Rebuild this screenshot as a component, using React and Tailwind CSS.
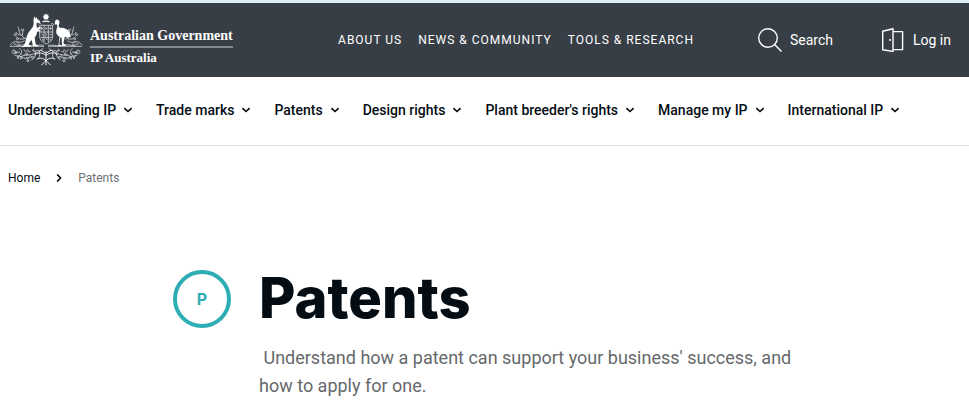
import React from 'react';

const topLinks = ['About us', 'News & Community', 'Tools & Research'];

const menuItems = [
  'Understanding IP',
  'Trade marks',
  'Patents',
  'Design rights',
  "Plant breeder's rights",
  'Manage my IP',
  'International IP',
];

// One side of the wattle, mirrored for the other
const WattleBranch = () => (
  <g fill="none" stroke="currentColor" strokeWidth="2.6" opacity="0.75">
    <path d="M80 118c-12-4-20-14-24-28M62 104c-8 2-12-2-14-8M66 108c4-8 2-16-2-22M76 114c-10 6-20 4-26-4M60 92c-4-4-6-8-5-12M74 122c-8 6-18 6-24 2" />
    <path d="M30 136c6-10 16-14 24-8s2 14-4 10M30 139h102M40 132c8-2 10 6 20 4s18-2 26 0 20 2 28 0 12 0 18 0" />
    <path d="M130 144c-14 14-34 22-58 22M46 150c-8 0-12 6-8 10s10 0 8-4M58 146c8 2 10 12 2 16M66 160c-6 8-14 10-22 6M84 148c-2 8 4 10 8 6M92 164c-4 8-10 14-18 12M106 158c2 10-4 18-12 22M118 150c0 10 2 18-2 24M72 148c0 6 6 8 10 4M102 146c-4 6 0 12 6 8" />
    <path d="M38 150c6 6 14 8 22 6M50 168c8 4 18 2 24-4M78 172c6 4 14 2 18-4M96 150c6 4 14 4 20 0M60 178c4-4 10-6 16-4" />
    <circle cx="46" cy="104" r="3" />
    <circle cx="52" cy="116" r="3" />
    <circle cx="70" cy="90" r="2" />
    <circle cx="48" cy="158" r="3" />
    <circle cx="64" cy="172" r="3" />
    <circle cx="80" cy="162" r="3" />
    <circle cx="98" cy="172" r="3" />
    <circle cx="54" cy="174" r="2" />
    <circle cx="84" cy="182" r="3" />
  </g>
);

const CoatOfArms = () => (
  <svg className="w-[76px] h-14 shrink-0" viewBox="24 36 228 168" fill="currentColor" aria-hidden="true">
    <WattleBranch />
    <g transform="translate(276 0) scale(-1 1)">
      <WattleBranch />
    </g>
    {/* star and wreath */}
    <path d="M138 40l3 5 5-2-2 5 4 3-4 3 1 5-5-2-2 3-2-3-5 2 1-5-4-3 4-3-2-5 5 2z" />
    <path d="M127 64c7-3 15-3 22 0l-1 3c-7-2-13-2-20 0z" />
    {/* shield */}
    <g fill="none" stroke="currentColor" strokeWidth="2.4" opacity="0.85">
      <path d="M119 76h39v32c0 12-8 19-19 24-12-5-20-12-20-24zM119 96h39M132 76v50M145 76v50M122 112h34" />
      <path d="M125 80v11M121 86h8M136 82l6 7M142 82l-6 7M152 80v10M148 85h7M124 101l6 6M138 99v10M148 104h8M137 114l5 6M127 117l3 5M149 116l3 5" />
      <path d="M116 73c2-4 6-4 8-1M153 72c4-3 7-1 8 3" />
    </g>
    {/* kangaroo */}
    <path d="M103 49l4 7 3-6 2 8c4 1 7 4 9 8l-3 3-8-1c-1 6 0 10 1 15l10-3 2 3-9 7 7 1 1 3-11 1c0 8-3 13-7 17l3 21 7 3v3h-15l-4-19-6 7-3 8 8 2v3H76c-5 1-9 2-12 1 8-3 11-10 13-19 3-15 8-26 16-34 6-7 8-12 8-20-1-6 0-14 2-19z" />
    {/* emu */}
    <path d="M165 66c0-5 4-8 8-7 5 1 6 6 5 11-1 5-3 8-1 11 3 4 12 1 20 5 10 5 15 14 15 27l-5-3-4 4-5-4-4 2c-1 8-4 11-3 19l7 3v3h-12l-1-24-3-1-3 8-1 14 6 2v2h-11l3-4 1-15 2-8c-8-5-12-11-10-20 1-6 3-9 3-14 0-3-2-4-6-3l-2-3z" />
    {/* scroll below the shield */}
    <g fill="none" stroke="currentColor" strokeWidth="3" opacity="0.9">
      <path d="M104 164c12-8 22-6 34 2 12-8 22-10 34-2M110 178c10-6 20-4 28 4 8-8 18-10 28-4M138 154v42M124 194c6-2 10-8 14-14 4 6 8 12 14 14M122 150l16 10 16-10" />
    </g>
  </svg>
);

const Chevron = ({ className }) => (
  <svg
    className={className}
    viewBox="0 0 8 8"
    fill="none"
    stroke="currentColor"
    strokeWidth="1.6"
    aria-hidden="true"
  >
    <path d="M0.4 2.2L4 5.5l3.6-3.3" />
  </svg>
);

const SearchIcon = () => (
  <svg className="w-6 h-6" viewBox="0 0 24 24" fill="none" stroke="currentColor" strokeWidth="1.4" aria-hidden="true">
    <circle cx="10" cy="10" r="9.3" />
    <path d="M16.6 16.6l7 7" />
  </svg>
);

const DoorIcon = () => (
  <svg className="w-6 h-6" viewBox="0 0 24 24" fill="none" stroke="currentColor" strokeWidth="1.4" strokeLinejoin="round" aria-hidden="true">
    <path d="M1.7 3.2L12 0.8v22.6L1.7 21.8z" />
    <path d="M12 3.6h9.6v18H12" />
    <circle cx="9" cy="12" r="1" fill="currentColor" stroke="none" />
  </svg>
);

const Header = () => (
  <header className="border-t-3 border-[#d9eff6] bg-[#373e46] text-white">
    <div className="flex items-center pl-2 pr-[18px] h-[74px]">
      <a href="#" className="flex items-center gap-1.5">
        <CoatOfArms />
        <span className="flex flex-col font-['Liberation_Serif',serif] font-bold pt-3.5">
          <span className="text-sm leading-5 border-b-2 border-[#858a8e]">Australian Government</span>
          <span className="text-[13px] leading-5">IP Australia</span>
        </span>
      </a>
      <nav className="ml-auto flex gap-4 text-xs tracking-[1px] uppercase">
        {topLinks.map((link) => (
          <a key={link} href="#">{link}</a>
        ))}
      </nav>
      <div className="flex items-center gap-12 ml-16 text-sm">
        <button className="flex items-center gap-2">
          <SearchIcon />
          Search
        </button>
        <a href="#" className="flex items-center gap-2">
          <DoorIcon />
          Log in
        </a>
      </div>
    </div>
  </header>
);

const MainMenu = () => (
  <nav className="flex items-center gap-6 px-2 pt-[23px] pb-[25px] border-b border-[#e3e4e5] text-sm font-medium">
    {menuItems.map((item) => (
      <button key={item} className="flex items-center gap-2 whitespace-nowrap">
        {item}
        <Chevron className="w-2 h-2" />
      </button>
    ))}
  </nav>
);

const Breadcrumb = () => (
  <nav className="flex items-center px-2 pt-6 text-xs" aria-label="Breadcrumb">
    <a href="#">Home</a>
    <Chevron className="w-2 h-2 mx-[15px] -rotate-90" />
    <span className="text-[#6b6f72]">Patents</span>
  </nav>
);

const App = () => {
  return (
    <div className="min-h-screen bg-white text-[#040d14] font-[Roboto,sans-serif]">
      <Header />
      <MainMenu />
      <Breadcrumb />
      <main className="flex items-start gap-7 pt-20 px-[173px]">
        <div className="mt-1 w-[58px] h-[58px] shrink-0 rounded-full border-4 border-[#2eadb5] flex items-center justify-center text-[#2eadb5] font-[Inter,sans-serif] font-bold text-base">
          P
        </div>
        <div>
          <h1 className="font-[Inter,sans-serif] font-extrabold text-[56px] leading-16">Patents</h1>
          <p className="mt-3.5 max-w-[540px] text-lg leading-7 text-[#66696b]">
            &nbsp;Understand how a patent can support your business' success, and how to apply for one.
          </p>
        </div>
      </main>
    </div>
  );
};

export default App;
